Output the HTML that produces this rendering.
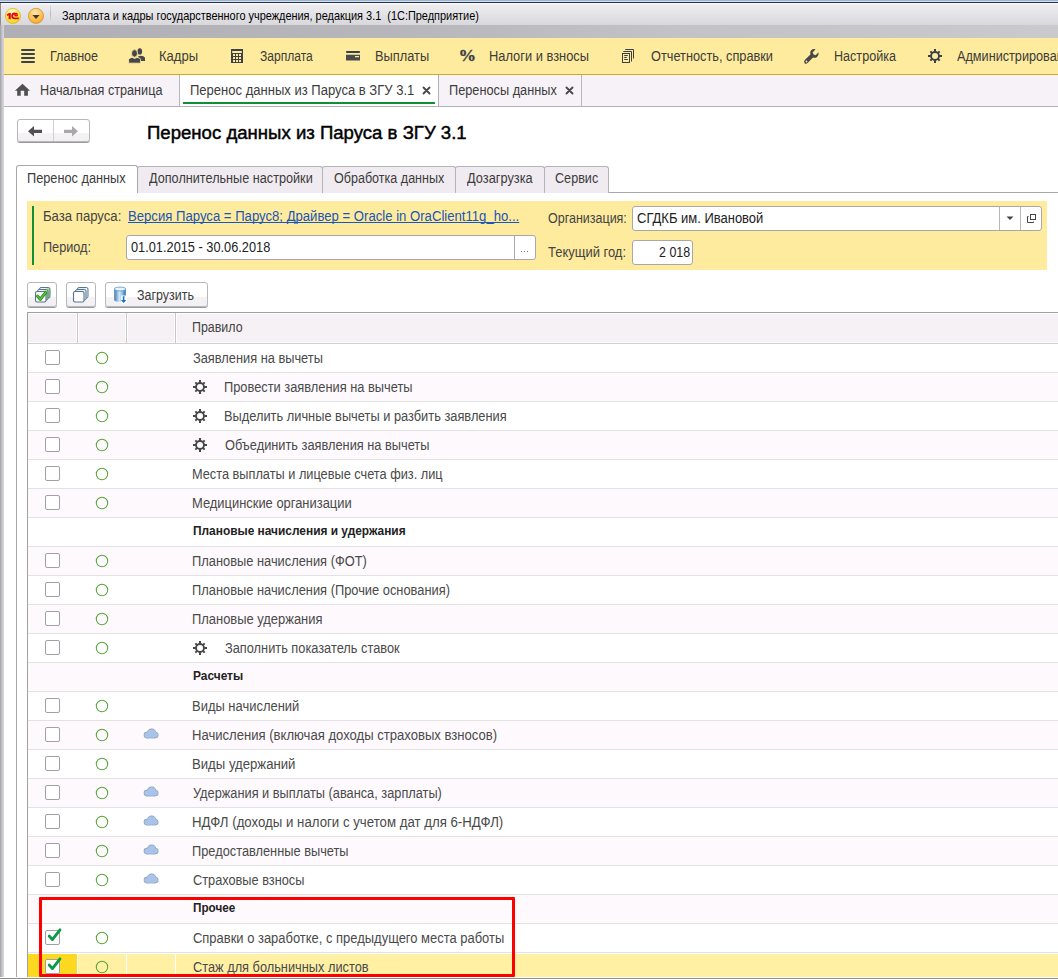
<!DOCTYPE html>
<html><head><meta charset="utf-8">
<style>
*{box-sizing:border-box;margin:0;padding:0}
html,body{width:1058px;height:979px;overflow:hidden;background:#fff;font-family:"Liberation Sans",sans-serif;color:#333}
.a{position:absolute;display:block}
.t{position:absolute;white-space:nowrap;line-height:1}
</style></head><body>
<div class="a" style="left:0px;top:0px;width:1058px;height:1px;background:#9db3d2"></div>
<div class="a" style="left:0px;top:1px;width:1058px;height:1px;background:#d4e0ee"></div>
<div class="a" style="left:0px;top:2px;width:1058px;height:1px;background:#25324a"></div>
<div class="a" style="left:0px;top:3px;width:1058px;height:22px;background:linear-gradient(#ffffff 0px,#ededf0 2px,#e4e4e8 50%,#d8d8dc)"></div>
<div class="a" style="left:0px;top:25px;width:1058px;height:13px;background:linear-gradient(90deg,#afafb5 0px,#b6b6bb 400px,#c3c3c7 680px,#cacacc 1058px)"></div>
<div class="a" style="left:0px;top:25px;width:4px;height:954px;background:linear-gradient(90deg,#a0a0a4,#c6c6ca 50%,#d8d8dc)"></div>
<div class="a" style="left:0px;top:3px;width:1px;height:22px;background:#8a8a90"></div>
<svg class="a" style="left:4px;top:7px;" width="19" height="19" viewBox="0 0 19 19"><defs><radialGradient id="g1" cx="45%" cy="30%" r="70%"><stop offset="0" stop-color="#fffce0"/><stop offset="0.55" stop-color="#ffee55"/><stop offset="1" stop-color="#f8d000"/></radialGradient></defs>
<circle cx="9" cy="8.9" r="7.6" fill="url(#g1)" stroke="#d4b040" stroke-width="0.7"/>
<path d="M2.8 7.4 L5 5.9 L6.8 5.9 L6.8 12.2 L4.6 12.2 L4.6 8.2 L3.4 8.9Z" fill="#e80000"/>
<path d="M11 6.6 Q8.5 6.3 8.2 8.7 Q8 11.4 10.6 11.4 L14.8 11.4" fill="none" stroke="#e80000" stroke-width="1.9"/>
<circle cx="12.1" cy="7.7" r="1.15" fill="none" stroke="#e80000" stroke-width="1.4"/></svg>
<svg class="a" style="left:27px;top:7px;" width="19" height="19" viewBox="0 0 19 19"><defs><radialGradient id="g3" cx="45%" cy="30%" r="70%"><stop offset="0" stop-color="#ffe8b8"/><stop offset="0.55" stop-color="#ffc45a"/><stop offset="1" stop-color="#f5a82a"/></radialGradient></defs>
<circle cx="9" cy="8.9" r="7.6" fill="url(#g3)" stroke="#c49238" stroke-width="0.7"/>
<path d="M5.3 8 L12.7 8 L9 12Z" fill="#4a3a20"/></svg>
<div class="a" style="left:50px;top:5px;width:1px;height:18px;background:linear-gradient(#e0e0e4,#b8b8bc,#e0e0e4)"></div>
<div class="t" style="left:61.80px;top:10px;font-size:12.4px;font-weight:normal;color:#000;transform:scaleX(0.8816);transform-origin:0 0;">Зарплата и кадры государственного учреждения, редакция 3.1&nbsp;&nbsp;(1С:Предприятие)</div>
<div class="a" style="left:4px;top:38px;width:1054px;height:36px;background:#feeb9d"></div>
<div class="a" style="left:4px;top:74px;width:1054px;height:1px;background:#c8aa2a"></div>
<div class="t" style="left:50.29px;top:50px;font-size:13.8px;font-weight:normal;color:#3c3c3c;transform:scaleX(0.9118);transform-origin:0 0;">Главное</div>
<div class="t" style="left:158.96px;top:50px;font-size:13.8px;font-weight:normal;color:#3c3c3c;transform:scaleX(0.9450);transform-origin:0 0;">Кадры</div>
<div class="t" style="left:260.30px;top:50px;font-size:13.8px;font-weight:normal;color:#3c3c3c;transform:scaleX(0.8738);transform-origin:0 0;">Зарплата</div>
<div class="t" style="left:374.67px;top:50px;font-size:13.8px;font-weight:normal;color:#3c3c3c;transform:scaleX(0.9298);transform-origin:0 0;">Выплаты</div>
<div class="t" style="left:488.97px;top:50px;font-size:13.8px;font-weight:normal;color:#3c3c3c;transform:scaleX(0.9330);transform-origin:0 0;">Налоги и взносы</div>
<div class="t" style="left:651.40px;top:50px;font-size:13.8px;font-weight:normal;color:#3c3c3c;transform:scaleX(0.9244);transform-origin:0 0;">Отчетность, справки</div>
<div class="t" style="left:833.89px;top:50px;font-size:13.8px;font-weight:normal;color:#3c3c3c;transform:scaleX(0.9119);transform-origin:0 0;">Настройка</div>
<div class="t" style="left:957.00px;top:50px;font-size:13.8px;font-weight:normal;color:#3c3c3c;transform:scaleX(0.9185);transform-origin:0 0;">Администрирование</div>
<div class="a" style="left:21px;top:49px;width:14px;height:2px;background:#3d4048;border-radius:1px"></div>
<div class="a" style="left:21px;top:53px;width:14px;height:2px;background:#3d4048;border-radius:1px"></div>
<div class="a" style="left:21px;top:57px;width:14px;height:2px;background:#3d4048;border-radius:1px"></div>
<div class="a" style="left:21px;top:61px;width:14px;height:2px;background:#3d4048;border-radius:1px"></div>
<svg class="a" style="left:124px;top:42px;" width="26" height="26" viewBox="0 0 26 26"><g fill="#45474a">
<ellipse cx="15.8" cy="9.4" rx="2.3" ry="3.2"/>
<path d="M14 14.6 Q16 13.6 18 13.9 Q21 14.4 21 16.4 L21 18.9 L15 18.9Z"/>
</g>
<g fill="#45474a" stroke="#feeb9d" stroke-width="0.9">
<ellipse cx="10.5" cy="11.4" rx="3" ry="3.8"/>
<path d="M4.6 17.5 Q5 15.6 8.2 15.4 L10.6 16.4 L13 15.4 Q16.2 15.6 16.6 17.5 L16.6 21.2 L4.6 21.2Z"/>
</g></svg>
<svg class="a" style="left:226px;top:42px;" width="26" height="26" viewBox="0 0 26 26"><path fill="#3d4048" fill-rule="evenodd" d="M5 7 H17 V21 H5Z M6.2 9 V11 H15.8 V9Z
M7 12 V14 H9 V12Z M10 12 V14 H12 V12Z M13 12 V14 H15 V12Z
M7 15 V17 H9 V15Z M10 15 V17 H12 V15Z M13 15 V17 H15 V15Z
M7 18 V20 H9 V18Z M10 18 V20 H12 V18Z M13 18 V20 H15 V18Z"/></svg>
<svg class="a" style="left:340px;top:42px;" width="26" height="26" viewBox="0 0 26 26"><rect x="6" y="9" width="14" height="2" rx="0.8" fill="#3d4048"/>
<path fill="#4a4c4c" fill-rule="evenodd" d="M6 12.7 H20 V18.6 H6Z M15 14 V15.2 H19 V14Z"/></svg>
<div class="t" style="left:458.6px;top:46.6px;-webkit-text-stroke:0.35px #3d4048;font-family:'Liberation Serif',serif;font-weight:bold;font-size:17.6px;color:#3d4048">%</div>
<svg class="a" style="left:614px;top:42px;" width="26" height="26" viewBox="0 0 26 26"><g fill="none" stroke="#3d4048" stroke-width="1">
<rect x="8.5" y="11.5" width="7" height="9"/>
<path d="M9.3 9.5 H17.5 V19.5"/>
<path d="M11.3 7.5 H19.5 V16.5"/>
<path d="M10.2 13.5 H13.8 M10.2 15.5 H12.8 M10.2 17.5 H13.8"/>
</g></svg>
<svg class="a" style="left:798px;top:42px;" width="26" height="26" viewBox="0 0 26 26"><path fill="#45474a" fill-rule="evenodd" d="M7 17.8 L12.4 12.4 Q11.6 9.6 13.2 8.2 Q14.6 6.8 17.6 7.2 L14.6 10.6 L15.6 12.6 L17.6 13.2 L20.6 10.2 Q20.9 13.4 19 15 Q17.4 16.3 15 15.6 L9.6 21 Q7.8 22.4 6.6 21.2 Q5.4 19.6 7 17.8Z M8.5 19.5 m-0.9 0 a0.9 0.9 0 1 0 1.8 0 a0.9 0.9 0 1 0 -1.8 0Z"/></svg>
<svg class="a" style="left:922px;top:42px;" width="26" height="26" viewBox="0 0 26 26"><g fill="#3d4048"><path fill-rule="evenodd" d="M13 14 m-4.9 0 a4.9 4.9 0 1 0 9.8 0 a4.9 4.9 0 1 0 -9.8 0Z M13 14 m-3 0 a3 3 0 1 0 6 0 a3 3 0 1 0 -6 0Z"/>
<g transform="translate(13 14)"><rect x="-1" y="-7" width="2" height="14"/><rect x="-7" y="-1" width="14" height="2"/>
<rect x="-1" y="-6.6" width="2" height="13.2" transform="rotate(45)"/><rect x="-1" y="-6.6" width="2" height="13.2" transform="rotate(-45)"/></g>
<circle cx="13" cy="14" r="3" fill="#feeb9d"/></g></svg>
<div class="a" style="left:4px;top:75px;width:1054px;height:31px;background:#f7f2f7"></div>
<div class="a" style="left:4px;top:106px;width:1054px;height:1px;background:#b4b4b8"></div>
<div class="a" style="left:179px;top:75px;width:1px;height:31px;background:#b8b8bc"></div>
<div class="a" style="left:180px;top:75px;width:258px;height:31px;background:#fff"></div>
<div class="a" style="left:438px;top:75px;width:1px;height:31px;background:#b0b0b6"></div>
<div class="a" style="left:581px;top:75px;width:1px;height:31px;background:#b8b8bc"></div>
<div class="a" style="left:183px;top:102px;width:252px;height:2px;background:#109035"></div>
<svg class="a" style="left:8px;top:78px;" width="26" height="26" viewBox="0 0 26 26"><path fill="#505050" d="M14.5 5.8 L22 12.7 H19.9 V17.8 H16.2 V12.7 H12.7 V17.8 H9.2 V12.7 H6.9Z"/></svg>
<div class="t" style="left:40.18px;top:84px;font-size:13.8px;font-weight:normal;color:#3c3c3c;transform:scaleX(0.9173);transform-origin:0 0;">Начальная страница</div>
<div class="t" style="left:190.16px;top:84px;font-size:13.8px;font-weight:normal;color:#3c3c3c;transform:scaleX(0.9445);transform-origin:0 0;">Перенос данных из Паруса в ЗГУ 3.1</div>
<div class="t" style="left:449.08px;top:84px;font-size:13.8px;font-weight:normal;color:#3c3c3c;transform:scaleX(0.9241);transform-origin:0 0;">Переносы данных</div>
<svg class="a" style="left:414px;top:78px;" width="26" height="26" viewBox="0 0 26 26"><path d="M9.5 9.5 L15.5 15.5 M15.5 9.5 L9.5 15.5" stroke="#4a4a4a" stroke-width="1.9" stroke-linecap="round"/></svg>
<svg class="a" style="left:557px;top:78px;" width="26" height="26" viewBox="0 0 26 26"><path d="M9.5 9.5 L15.5 15.5 M15.5 9.5 L9.5 15.5" stroke="#4a4a4a" stroke-width="1.9" stroke-linecap="round"/></svg>
<div class="a" style="left:17px;top:119px;width:73px;height:23px;border:1px solid #b8b8b8;border-radius:3px;background:linear-gradient(#fff 0%,#fff 60%,#f5f2f5 62%,#f3f0f3);box-shadow:0 1px 0 #9a9a9a"></div>
<div class="a" style="left:53px;top:120px;width:1px;height:21px;background:#d0d0d0"></div>
<svg class="a" style="left:26px;top:124px;" width="18" height="14" viewBox="0 0 18 14"><path fill="#505050" d="M2 7.3 L8 2 V5.7 H16 V8.9 H8 V12.6Z"/></svg>
<svg class="a" style="left:62px;top:124px;" width="18" height="14" viewBox="0 0 18 14"><path fill="#a8a8a8" d="M16 7.3 L10 2 V5.7 H2 V8.9 H10 V12.6Z"/></svg>
<div class="t" style="left:147.01px;top:124px;font-size:18.8px;font-weight:normal;color:#000;transform:scaleX(0.9891);transform-origin:0 0;-webkit-text-stroke:0.45px #000">Перенос данных из Паруса в ЗГУ 3.1</div>
<div class="a" style="left:16px;top:192px;width:1042px;height:1px;background:#a8a8a8"></div>
<div class="a" style="left:16px;top:192px;width:1px;height:787px;background:#a8a8a8"></div>
<div class="a" style="left:137px;top:166px;width:186px;height:27px;background:#f0ebf0;border:1px solid #b4b4b8;border-bottom:none;border-radius:3px 3px 0 0"></div>
<div class="a" style="left:322px;top:166px;width:134px;height:27px;background:#f0ebf0;border:1px solid #b4b4b8;border-bottom:none;border-radius:3px 3px 0 0"></div>
<div class="a" style="left:455px;top:166px;width:90px;height:27px;background:#f0ebf0;border:1px solid #b4b4b8;border-bottom:none;border-radius:3px 3px 0 0"></div>
<div class="a" style="left:544px;top:166px;width:65px;height:27px;background:#f0ebf0;border:1px solid #b4b4b8;border-bottom:none;border-radius:3px 3px 0 0"></div>
<div class="a" style="left:16px;top:165px;width:122px;height:28px;background:#fff;border:1px solid #a8a8a8;border-bottom:none;border-radius:3px 3px 0 0"></div>
<div class="t" style="left:27.48px;top:172px;font-size:13.8px;font-weight:normal;color:#3c3c3c;transform:scaleX(0.9236);transform-origin:0 0;">Перенос данных</div>
<div class="t" style="left:148.70px;top:172px;font-size:13.8px;font-weight:normal;color:#3c3c3c;transform:scaleX(0.9180);transform-origin:0 0;">Дополнительные настройки</div>
<div class="t" style="left:334.10px;top:172px;font-size:13.8px;font-weight:normal;color:#3c3c3c;transform:scaleX(0.9099);transform-origin:0 0;">Обработка данных</div>
<div class="t" style="left:466.80px;top:172px;font-size:13.8px;font-weight:normal;color:#3c3c3c;transform:scaleX(0.9268);transform-origin:0 0;">Дозагрузка</div>
<div class="t" style="left:554.80px;top:172px;font-size:13.8px;font-weight:normal;color:#3c3c3c;transform:scaleX(0.9149);transform-origin:0 0;">Сервис</div>
<div class="a" style="left:27px;top:201px;width:1020px;height:69px;background:#feeb9d"></div>
<div class="a" style="left:32px;top:206px;width:2px;height:59px;background:#109035"></div>
<div class="t" style="left:42.55px;top:210px;font-size:13.8px;font-weight:normal;color:#444;transform:scaleX(0.9525);transform-origin:0 0;">База паруса:</div>
<div class="t" style="left:127.85px;top:210px;font-size:13.8px;font-weight:normal;color:#1a55b8;transform:scaleX(0.9516);transform-origin:0 0;text-decoration:underline;text-decoration-skip-ink:none;text-underline-offset:1px">Версия Паруса = Парус8; Драйвер = Oracle in OraClient11g_ho...</div>
<div class="t" style="left:42.58px;top:241px;font-size:13.8px;font-weight:normal;color:#444;transform:scaleX(0.9180);transform-origin:0 0;">Период:</div>
<div class="a" style="left:126px;top:235px;width:410px;height:25px;background:#fff;border:1px solid #a8a8a8;border-radius:3px"></div>
<div class="a" style="left:514px;top:236px;width:1px;height:23px;background:#a8a8ae"></div>
<div class="t" style="left:130.70px;top:241px;font-size:13.8px;font-weight:normal;color:#222;transform:scaleX(0.9260);transform-origin:0 0;">01.01.2015 - 30.06.2018</div>
<div class="a" style="left:520.8px;top:250.6px;width:1.6px;height:1.6px;background:#505050;border-radius:0.5px"></div>
<div class="a" style="left:523.8px;top:250.6px;width:1.6px;height:1.6px;background:#505050;border-radius:0.5px"></div>
<div class="a" style="left:526.9px;top:250.6px;width:1.6px;height:1.6px;background:#505050;border-radius:0.5px"></div>
<div class="t" style="left:547.50px;top:212px;font-size:13.8px;font-weight:normal;color:#444;transform:scaleX(0.9058);transform-origin:0 0;">Организация:</div>
<div class="a" style="left:632px;top:206px;width:410px;height:25px;background:#fff;border:1px solid #a8a8a8;border-radius:3px"></div>
<div class="a" style="left:999px;top:207px;width:1px;height:23px;background:#b8b8b8"></div>
<div class="a" style="left:1020px;top:207px;width:1px;height:23px;background:#b8b8b8"></div>
<div class="t" style="left:636.90px;top:212px;font-size:13.8px;font-weight:normal;color:#222;transform:scaleX(0.9410);transform-origin:0 0;">СГДКБ им. Ивановой</div>
<svg class="a" style="left:1003px;top:213px;" width="14" height="10" viewBox="0 0 14 10"><path d="M3.5 3.5 H10.5 L7 7Z" fill="#444"/></svg>
<svg class="a" style="left:1024px;top:212px;" width="14" height="14" viewBox="0 0 14 14"><g fill="none" stroke="#444" stroke-width="1"><rect x="6.5" y="2.5" width="5" height="5"/><path d="M4.5 4.5 H3.5 V10.5 H9.5 V9.5"/></g></svg>
<div class="t" style="left:547.50px;top:246px;font-size:13.8px;font-weight:normal;color:#444;transform:scaleX(0.9402);transform-origin:0 0;">Текущий год:</div>
<div class="a" style="left:632px;top:240px;width:61px;height:25px;background:#fff;border:1px solid #a8a8a8;border-radius:3px"></div>
<div class="t" style="left:658.60px;top:246px;font-size:13.8px;font-weight:normal;color:#222;transform:scaleX(0.9029);transform-origin:0 0;">2 018</div>
<div class="a" style="left:27px;top:282px;width:30px;height:25px;border:1px solid #b8b8b8;border-radius:3px;background:linear-gradient(#fff 0%,#fff 60%,#f5f2f5 62%,#f3f0f3 100%);box-shadow:0 1px 0 #9a9a9a"></div>
<div class="a" style="left:66px;top:282px;width:30px;height:25px;border:1px solid #b8b8b8;border-radius:3px;background:linear-gradient(#fff 0%,#fff 60%,#f5f2f5 62%,#f3f0f3 100%);box-shadow:0 1px 0 #9a9a9a"></div>
<div class="a" style="left:105px;top:282px;width:103px;height:25px;border:1px solid #b8b8b8;border-radius:3px;background:linear-gradient(#fff 0%,#fff 60%,#f5f2f5 62%,#f3f0f3 100%);box-shadow:0 1px 0 #9a9a9a"></div>
<svg class="a" style="left:26px;top:280px;" width="34" height="30" viewBox="0 0 34 30"><defs><linearGradient id="gg" x1="0" x2="1"><stop offset="0.5" stop-color="#eef6f0"/><stop offset="1" stop-color="#8fd070"/></linearGradient></defs><rect x="13.5" y="7.5" width="10.5" height="10.5" rx="1.6" fill="url(#gg)" stroke="#557590" stroke-width="1"/><rect x="11.5" y="9.5" width="10.5" height="10.5" rx="1.6" fill="url(#gg)" stroke="#557590" stroke-width="1"/><rect x="9.5" y="11.5" width="10.5" height="10.5" rx="1.6" fill="#fff" stroke="#557590" stroke-width="1.1"/><path d="M11.6 16.2 L14.3 19.3 L19.6 12.6" fill="none" stroke="#1e8a12" stroke-width="3" stroke-linecap="round" stroke-linejoin="round"/><path d="M11.6 16.2 L14.3 19.3 L19.6 12.6" fill="none" stroke="#5cc038" stroke-width="1.6" stroke-linecap="round" stroke-linejoin="round"/></svg>
<svg class="a" style="left:64px;top:280px;" width="34" height="30" viewBox="0 0 34 30"><rect x="13.5" y="7.5" width="10.5" height="10.5" rx="1.6" fill="#e8f0f2" stroke="#557590" stroke-width="1"/><rect x="11.5" y="9.5" width="10.5" height="10.5" rx="1.6" fill="#e8f0f2" stroke="#557590" stroke-width="1"/><rect x="9.5" y="11.5" width="10.5" height="10.5" rx="1.6" fill="#fff" stroke="#557590" stroke-width="1.1"/></svg>
<svg class="a" style="left:106px;top:280px;" width="30" height="30" viewBox="0 0 30 30"><defs><linearGradient id="db" x1="0" x2="1"><stop offset="0" stop-color="#3d78b0"/><stop offset="0.45" stop-color="#cfe8fa"/><stop offset="0.7" stop-color="#8bbce6"/><stop offset="1" stop-color="#2a68a8"/></linearGradient></defs>
<path d="M8.2 9 V20 Q8.2 21.8 14 21.8 Q19.8 21.8 19.8 20 V9Z" fill="url(#db)"/>
<ellipse cx="14" cy="9" rx="5.8" ry="1.9" fill="#e4f4fc" stroke="#5a98c8" stroke-width="0.8"/>
<rect x="15" y="15.5" width="6" height="8" fill="#fff"/>
<path d="M17.6 16.2 V21.5" stroke="#1a70c8" stroke-width="1.6"/><path d="M14.9 20 L20.3 20 L17.6 23Z" fill="#1a70c8"/></svg>
<div class="t" style="left:136.50px;top:289px;font-size:13.8px;font-weight:normal;color:#3c3c3c;transform:scaleX(0.9032);transform-origin:0 0;">Загрузить</div>
<div class="a" style="left:27px;top:312px;width:1031px;height:1px;background:#a0a0a0"></div>
<div class="a" style="left:27px;top:312px;width:1px;height:667px;background:#a0a0a0"></div>
<div class="a" style="left:28px;top:313px;width:1030px;height:1px;background:#fff"></div>
<div class="a" style="left:28px;top:314px;width:1030px;height:28px;background:#f6f1f5"></div>
<div class="a" style="left:28px;top:342px;width:1030px;height:1px;background:#fdfcfd"></div>
<div class="a" style="left:28px;top:343px;width:1030px;height:1px;background:#d0d0d0"></div>
<div class="a" style="left:28px;top:313px;width:1030px;height:1px;background:#fff"></div>
<div class="a" style="left:76px;top:313px;width:3px;height:30px;background:#fff"></div>
<div class="a" style="left:77px;top:313px;width:1px;height:30px;background:#c6c6c6"></div>
<div class="a" style="left:125px;top:313px;width:3px;height:30px;background:#fff"></div>
<div class="a" style="left:126px;top:313px;width:1px;height:30px;background:#c6c6c6"></div>
<div class="a" style="left:174px;top:313px;width:3px;height:30px;background:#fff"></div>
<div class="a" style="left:175px;top:313px;width:1px;height:30px;background:#c6c6c6"></div>
<div class="t" style="left:192.30px;top:321px;font-size:13.8px;font-weight:normal;color:#444;transform:scaleX(0.9000);transform-origin:0 0;">Правило</div>
<div class="a" style="left:28px;top:344px;width:1030px;height:28px;background:#fff"></div>
<div class="a" style="left:28px;top:372px;width:1030px;height:1px;background:#e2e2e2"></div>
<div class="a" style="left:45px;top:350px;width:15px;height:15px;background:#fff;border:1px solid #a0a0a6;border-radius:2px"></div>
<svg class="a" style="left:94px;top:350px;" width="16" height="16" viewBox="0 0 16 16"><circle cx="8" cy="8" r="5.7" fill="none" stroke="#58a63c" stroke-width="1.05"/></svg>
<div class="t" style="left:192.90px;top:352px;font-size:13.8px;font-weight:normal;color:#4a4a4a;transform:scaleX(0.9288);transform-origin:0 0;">Заявления на вычеты</div>
<div class="a" style="left:28px;top:373px;width:1030px;height:28px;background:#fdf9fd"></div>
<div class="a" style="left:28px;top:401px;width:1030px;height:1px;background:#e2e2e2"></div>
<div class="a" style="left:45px;top:379px;width:15px;height:15px;background:#fff;border:1px solid #a0a0a6;border-radius:2px"></div>
<svg class="a" style="left:94px;top:379px;" width="16" height="16" viewBox="0 0 16 16"><circle cx="8" cy="8" r="5.7" fill="none" stroke="#58a63c" stroke-width="1.05"/></svg>
<svg class="a" style="left:188px;top:376px;" width="26" height="22" viewBox="0 0 26 22"><g fill="#484848"><path fill-rule="evenodd" d="M12 11 m-4.9 0 a4.9 4.9 0 1 0 9.8 0 a4.9 4.9 0 1 0 -9.8 0Z M12 11 m-3 0 a3 3 0 1 0 6 0 a3 3 0 1 0 -6 0Z"/>
<g transform="translate(12 11)"><rect x="-1" y="-7" width="2" height="14"/><rect x="-7" y="-1" width="14" height="2"/>
<rect x="-1" y="-6.6" width="2" height="13.2" transform="rotate(45)"/><rect x="-1" y="-6.6" width="2" height="13.2" transform="rotate(-45)"/></g>
<circle cx="12" cy="11" r="3" fill="#fdf9fd"/></g></svg>
<div class="t" style="left:224.07px;top:381px;font-size:13.8px;font-weight:normal;color:#4a4a4a;transform:scaleX(0.9303);transform-origin:0 0;">Провести заявления на вычеты</div>
<div class="a" style="left:28px;top:402px;width:1030px;height:28px;background:#fff"></div>
<div class="a" style="left:28px;top:430px;width:1030px;height:1px;background:#e2e2e2"></div>
<div class="a" style="left:45px;top:408px;width:15px;height:15px;background:#fff;border:1px solid #a0a0a6;border-radius:2px"></div>
<svg class="a" style="left:94px;top:408px;" width="16" height="16" viewBox="0 0 16 16"><circle cx="8" cy="8" r="5.7" fill="none" stroke="#58a63c" stroke-width="1.05"/></svg>
<svg class="a" style="left:188px;top:405px;" width="26" height="22" viewBox="0 0 26 22"><g fill="#484848"><path fill-rule="evenodd" d="M12 11 m-4.9 0 a4.9 4.9 0 1 0 9.8 0 a4.9 4.9 0 1 0 -9.8 0Z M12 11 m-3 0 a3 3 0 1 0 6 0 a3 3 0 1 0 -6 0Z"/>
<g transform="translate(12 11)"><rect x="-1" y="-7" width="2" height="14"/><rect x="-7" y="-1" width="14" height="2"/>
<rect x="-1" y="-6.6" width="2" height="13.2" transform="rotate(45)"/><rect x="-1" y="-6.6" width="2" height="13.2" transform="rotate(-45)"/></g>
<circle cx="12" cy="11" r="3" fill="#fff"/></g></svg>
<div class="t" style="left:224.07px;top:410px;font-size:13.8px;font-weight:normal;color:#4a4a4a;transform:scaleX(0.9298);transform-origin:0 0;">Выделить личные вычеты и разбить заявления</div>
<div class="a" style="left:28px;top:431px;width:1030px;height:28px;background:#fdf9fd"></div>
<div class="a" style="left:28px;top:459px;width:1030px;height:1px;background:#e2e2e2"></div>
<div class="a" style="left:45px;top:437px;width:15px;height:15px;background:#fff;border:1px solid #a0a0a6;border-radius:2px"></div>
<svg class="a" style="left:94px;top:437px;" width="16" height="16" viewBox="0 0 16 16"><circle cx="8" cy="8" r="5.7" fill="none" stroke="#58a63c" stroke-width="1.05"/></svg>
<svg class="a" style="left:188px;top:434px;" width="26" height="22" viewBox="0 0 26 22"><g fill="#484848"><path fill-rule="evenodd" d="M12 11 m-4.9 0 a4.9 4.9 0 1 0 9.8 0 a4.9 4.9 0 1 0 -9.8 0Z M12 11 m-3 0 a3 3 0 1 0 6 0 a3 3 0 1 0 -6 0Z"/>
<g transform="translate(12 11)"><rect x="-1" y="-7" width="2" height="14"/><rect x="-7" y="-1" width="14" height="2"/>
<rect x="-1" y="-6.6" width="2" height="13.2" transform="rotate(45)"/><rect x="-1" y="-6.6" width="2" height="13.2" transform="rotate(-45)"/></g>
<circle cx="12" cy="11" r="3" fill="#fdf9fd"/></g></svg>
<div class="t" style="left:225.00px;top:439px;font-size:13.8px;font-weight:normal;color:#4a4a4a;transform:scaleX(0.9273);transform-origin:0 0;">Объединить заявления на вычеты</div>
<div class="a" style="left:28px;top:460px;width:1030px;height:28px;background:#fff"></div>
<div class="a" style="left:28px;top:488px;width:1030px;height:1px;background:#e2e2e2"></div>
<div class="a" style="left:45px;top:466px;width:15px;height:15px;background:#fff;border:1px solid #a0a0a6;border-radius:2px"></div>
<svg class="a" style="left:94px;top:466px;" width="16" height="16" viewBox="0 0 16 16"><circle cx="8" cy="8" r="5.7" fill="none" stroke="#58a63c" stroke-width="1.05"/></svg>
<div class="t" style="left:191.98px;top:468px;font-size:13.8px;font-weight:normal;color:#4a4a4a;transform:scaleX(0.9244);transform-origin:0 0;">Места выплаты и лицевые счета физ. лиц</div>
<div class="a" style="left:28px;top:489px;width:1030px;height:28px;background:#fdf9fd"></div>
<div class="a" style="left:28px;top:517px;width:1030px;height:1px;background:#e2e2e2"></div>
<div class="a" style="left:45px;top:495px;width:15px;height:15px;background:#fff;border:1px solid #a0a0a6;border-radius:2px"></div>
<svg class="a" style="left:94px;top:495px;" width="16" height="16" viewBox="0 0 16 16"><circle cx="8" cy="8" r="5.7" fill="none" stroke="#58a63c" stroke-width="1.05"/></svg>
<div class="t" style="left:191.96px;top:497px;font-size:13.8px;font-weight:normal;color:#4a4a4a;transform:scaleX(0.9361);transform-origin:0 0;">Медицинские организации</div>
<div class="a" style="left:28px;top:518px;width:1030px;height:28px;background:#fff"></div>
<div class="a" style="left:28px;top:546px;width:1030px;height:1px;background:#e2e2e2"></div>
<div class="t" style="left:192.84px;top:525px;font-size:12.4px;font-weight:bold;color:#222;transform:scaleX(0.9605);transform-origin:0 0;">Плановые начисления и удержания</div>
<div class="a" style="left:28px;top:547px;width:1030px;height:28px;background:#fdf9fd"></div>
<div class="a" style="left:28px;top:575px;width:1030px;height:1px;background:#e2e2e2"></div>
<div class="a" style="left:45px;top:553px;width:15px;height:15px;background:#fff;border:1px solid #a0a0a6;border-radius:2px"></div>
<svg class="a" style="left:94px;top:553px;" width="16" height="16" viewBox="0 0 16 16"><circle cx="8" cy="8" r="5.7" fill="none" stroke="#58a63c" stroke-width="1.05"/></svg>
<div class="t" style="left:191.97px;top:555px;font-size:13.8px;font-weight:normal;color:#4a4a4a;transform:scaleX(0.9317);transform-origin:0 0;">Плановые начисления (ФОТ)</div>
<div class="a" style="left:28px;top:576px;width:1030px;height:28px;background:#fff"></div>
<div class="a" style="left:28px;top:604px;width:1030px;height:1px;background:#e2e2e2"></div>
<div class="a" style="left:45px;top:582px;width:15px;height:15px;background:#fff;border:1px solid #a0a0a6;border-radius:2px"></div>
<svg class="a" style="left:94px;top:582px;" width="16" height="16" viewBox="0 0 16 16"><circle cx="8" cy="8" r="5.7" fill="none" stroke="#58a63c" stroke-width="1.05"/></svg>
<div class="t" style="left:191.97px;top:584px;font-size:13.8px;font-weight:normal;color:#4a4a4a;transform:scaleX(0.9316);transform-origin:0 0;">Плановые начисления (Прочие основания)</div>
<div class="a" style="left:28px;top:605px;width:1030px;height:28px;background:#fdf9fd"></div>
<div class="a" style="left:28px;top:633px;width:1030px;height:1px;background:#e2e2e2"></div>
<div class="a" style="left:45px;top:611px;width:15px;height:15px;background:#fff;border:1px solid #a0a0a6;border-radius:2px"></div>
<svg class="a" style="left:94px;top:611px;" width="16" height="16" viewBox="0 0 16 16"><circle cx="8" cy="8" r="5.7" fill="none" stroke="#58a63c" stroke-width="1.05"/></svg>
<div class="t" style="left:191.96px;top:613px;font-size:13.8px;font-weight:normal;color:#4a4a4a;transform:scaleX(0.9370);transform-origin:0 0;">Плановые удержания</div>
<div class="a" style="left:28px;top:634px;width:1030px;height:28px;background:#fff"></div>
<div class="a" style="left:28px;top:662px;width:1030px;height:1px;background:#e2e2e2"></div>
<div class="a" style="left:45px;top:640px;width:15px;height:15px;background:#fff;border:1px solid #a0a0a6;border-radius:2px"></div>
<svg class="a" style="left:94px;top:640px;" width="16" height="16" viewBox="0 0 16 16"><circle cx="8" cy="8" r="5.7" fill="none" stroke="#58a63c" stroke-width="1.05"/></svg>
<svg class="a" style="left:188px;top:637px;" width="26" height="22" viewBox="0 0 26 22"><g fill="#484848"><path fill-rule="evenodd" d="M12 11 m-4.9 0 a4.9 4.9 0 1 0 9.8 0 a4.9 4.9 0 1 0 -9.8 0Z M12 11 m-3 0 a3 3 0 1 0 6 0 a3 3 0 1 0 -6 0Z"/>
<g transform="translate(12 11)"><rect x="-1" y="-7" width="2" height="14"/><rect x="-7" y="-1" width="14" height="2"/>
<rect x="-1" y="-6.6" width="2" height="13.2" transform="rotate(45)"/><rect x="-1" y="-6.6" width="2" height="13.2" transform="rotate(-45)"/></g>
<circle cx="12" cy="11" r="3" fill="#fff"/></g></svg>
<div class="t" style="left:225.00px;top:642px;font-size:13.8px;font-weight:normal;color:#4a4a4a;transform:scaleX(0.9271);transform-origin:0 0;">Заполнить показатель ставок</div>
<div class="a" style="left:28px;top:663px;width:1030px;height:28px;background:#fdf9fd"></div>
<div class="a" style="left:28px;top:691px;width:1030px;height:1px;background:#e2e2e2"></div>
<div class="t" style="left:192.84px;top:670px;font-size:12.4px;font-weight:bold;color:#222;transform:scaleX(0.9608);transform-origin:0 0;">Расчеты</div>
<div class="a" style="left:28px;top:692px;width:1030px;height:28px;background:#fff"></div>
<div class="a" style="left:28px;top:720px;width:1030px;height:1px;background:#e2e2e2"></div>
<div class="a" style="left:45px;top:698px;width:15px;height:15px;background:#fff;border:1px solid #a0a0a6;border-radius:2px"></div>
<svg class="a" style="left:94px;top:698px;" width="16" height="16" viewBox="0 0 16 16"><circle cx="8" cy="8" r="5.7" fill="none" stroke="#58a63c" stroke-width="1.05"/></svg>
<div class="t" style="left:191.96px;top:700px;font-size:13.8px;font-weight:normal;color:#4a4a4a;transform:scaleX(0.9389);transform-origin:0 0;">Виды начислений</div>
<div class="a" style="left:28px;top:721px;width:1030px;height:28px;background:#fdf9fd"></div>
<div class="a" style="left:28px;top:749px;width:1030px;height:1px;background:#e2e2e2"></div>
<div class="a" style="left:45px;top:727px;width:15px;height:15px;background:#fff;border:1px solid #a0a0a6;border-radius:2px"></div>
<svg class="a" style="left:94px;top:727px;" width="16" height="16" viewBox="0 0 16 16"><circle cx="8" cy="8" r="5.7" fill="none" stroke="#58a63c" stroke-width="1.05"/></svg>
<svg class="a" style="left:142px;top:727px;" width="18" height="14" viewBox="0 0 18 14"><g fill="#8aa0bc"><circle cx="5" cy="8.1" r="3.3"/><circle cx="9.6" cy="6.3" r="4.8"/><circle cx="13.3" cy="8.1" r="3.2"/><rect x="5" y="7.3999999999999995" width="8.3" height="4.0"/></g><g fill="#a9c3e9"><circle cx="5" cy="8.1" r="2.6"/><circle cx="9.6" cy="6.3" r="4.1"/><circle cx="13.3" cy="8.1" r="2.5"/><rect x="5" y="8.1" width="8.3" height="2.6"/></g></svg>
<div class="t" style="left:191.95px;top:729px;font-size:13.8px;font-weight:normal;color:#4a4a4a;transform:scaleX(0.9481);transform-origin:0 0;">Начисления (включая доходы страховых взносов)</div>
<div class="a" style="left:28px;top:750px;width:1030px;height:28px;background:#fff"></div>
<div class="a" style="left:28px;top:778px;width:1030px;height:1px;background:#e2e2e2"></div>
<div class="a" style="left:45px;top:756px;width:15px;height:15px;background:#fff;border:1px solid #a0a0a6;border-radius:2px"></div>
<svg class="a" style="left:94px;top:756px;" width="16" height="16" viewBox="0 0 16 16"><circle cx="8" cy="8" r="5.7" fill="none" stroke="#58a63c" stroke-width="1.05"/></svg>
<div class="t" style="left:191.95px;top:758px;font-size:13.8px;font-weight:normal;color:#4a4a4a;transform:scaleX(0.9533);transform-origin:0 0;">Виды удержаний</div>
<div class="a" style="left:28px;top:779px;width:1030px;height:28px;background:#fdf9fd"></div>
<div class="a" style="left:28px;top:807px;width:1030px;height:1px;background:#e2e2e2"></div>
<div class="a" style="left:45px;top:785px;width:15px;height:15px;background:#fff;border:1px solid #a0a0a6;border-radius:2px"></div>
<svg class="a" style="left:94px;top:785px;" width="16" height="16" viewBox="0 0 16 16"><circle cx="8" cy="8" r="5.7" fill="none" stroke="#58a63c" stroke-width="1.05"/></svg>
<svg class="a" style="left:142px;top:785px;" width="18" height="14" viewBox="0 0 18 14"><g fill="#8aa0bc"><circle cx="5" cy="8.1" r="3.3"/><circle cx="9.6" cy="6.3" r="4.8"/><circle cx="13.3" cy="8.1" r="3.2"/><rect x="5" y="7.3999999999999995" width="8.3" height="4.0"/></g><g fill="#a9c3e9"><circle cx="5" cy="8.1" r="2.6"/><circle cx="9.6" cy="6.3" r="4.1"/><circle cx="13.3" cy="8.1" r="2.5"/><rect x="5" y="8.1" width="8.3" height="2.6"/></g></svg>
<div class="t" style="left:192.90px;top:787px;font-size:13.8px;font-weight:normal;color:#4a4a4a;transform:scaleX(0.9261);transform-origin:0 0;">Удержания и выплаты (аванса, зарплаты)</div>
<div class="a" style="left:28px;top:808px;width:1030px;height:28px;background:#fff"></div>
<div class="a" style="left:28px;top:836px;width:1030px;height:1px;background:#e2e2e2"></div>
<div class="a" style="left:45px;top:814px;width:15px;height:15px;background:#fff;border:1px solid #a0a0a6;border-radius:2px"></div>
<svg class="a" style="left:94px;top:814px;" width="16" height="16" viewBox="0 0 16 16"><circle cx="8" cy="8" r="5.7" fill="none" stroke="#58a63c" stroke-width="1.05"/></svg>
<svg class="a" style="left:142px;top:814px;" width="18" height="14" viewBox="0 0 18 14"><g fill="#8aa0bc"><circle cx="5" cy="8.1" r="3.3"/><circle cx="9.6" cy="6.3" r="4.8"/><circle cx="13.3" cy="8.1" r="3.2"/><rect x="5" y="7.3999999999999995" width="8.3" height="4.0"/></g><g fill="#a9c3e9"><circle cx="5" cy="8.1" r="2.6"/><circle cx="9.6" cy="6.3" r="4.1"/><circle cx="13.3" cy="8.1" r="2.5"/><rect x="5" y="8.1" width="8.3" height="2.6"/></g></svg>
<div class="t" style="left:191.94px;top:816px;font-size:13.8px;font-weight:normal;color:#4a4a4a;transform:scaleX(0.9594);transform-origin:0 0;">НДФЛ (доходы и налоги с учетом дат для 6-НДФЛ)</div>
<div class="a" style="left:28px;top:837px;width:1030px;height:28px;background:#fdf9fd"></div>
<div class="a" style="left:28px;top:865px;width:1030px;height:1px;background:#e2e2e2"></div>
<div class="a" style="left:45px;top:843px;width:15px;height:15px;background:#fff;border:1px solid #a0a0a6;border-radius:2px"></div>
<svg class="a" style="left:94px;top:843px;" width="16" height="16" viewBox="0 0 16 16"><circle cx="8" cy="8" r="5.7" fill="none" stroke="#58a63c" stroke-width="1.05"/></svg>
<svg class="a" style="left:142px;top:843px;" width="18" height="14" viewBox="0 0 18 14"><g fill="#8aa0bc"><circle cx="5" cy="8.1" r="3.3"/><circle cx="9.6" cy="6.3" r="4.8"/><circle cx="13.3" cy="8.1" r="3.2"/><rect x="5" y="7.3999999999999995" width="8.3" height="4.0"/></g><g fill="#a9c3e9"><circle cx="5" cy="8.1" r="2.6"/><circle cx="9.6" cy="6.3" r="4.1"/><circle cx="13.3" cy="8.1" r="2.5"/><rect x="5" y="8.1" width="8.3" height="2.6"/></g></svg>
<div class="t" style="left:191.97px;top:845px;font-size:13.8px;font-weight:normal;color:#4a4a4a;transform:scaleX(0.9281);transform-origin:0 0;">Предоставленные вычеты</div>
<div class="a" style="left:28px;top:866px;width:1030px;height:28px;background:#fff"></div>
<div class="a" style="left:28px;top:894px;width:1030px;height:1px;background:#e2e2e2"></div>
<div class="a" style="left:45px;top:872px;width:15px;height:15px;background:#fff;border:1px solid #a0a0a6;border-radius:2px"></div>
<svg class="a" style="left:94px;top:872px;" width="16" height="16" viewBox="0 0 16 16"><circle cx="8" cy="8" r="5.7" fill="none" stroke="#58a63c" stroke-width="1.05"/></svg>
<svg class="a" style="left:142px;top:872px;" width="18" height="14" viewBox="0 0 18 14"><g fill="#8aa0bc"><circle cx="5" cy="8.1" r="3.3"/><circle cx="9.6" cy="6.3" r="4.8"/><circle cx="13.3" cy="8.1" r="3.2"/><rect x="5" y="7.3999999999999995" width="8.3" height="4.0"/></g><g fill="#a9c3e9"><circle cx="5" cy="8.1" r="2.6"/><circle cx="9.6" cy="6.3" r="4.1"/><circle cx="13.3" cy="8.1" r="2.5"/><rect x="5" y="8.1" width="8.3" height="2.6"/></g></svg>
<div class="t" style="left:192.90px;top:874px;font-size:13.8px;font-weight:normal;color:#4a4a4a;transform:scaleX(0.9250);transform-origin:0 0;">Страховые взносы</div>
<div class="a" style="left:28px;top:895px;width:1030px;height:28px;background:#fdf9fd"></div>
<div class="a" style="left:28px;top:923px;width:1030px;height:1px;background:#e2e2e2"></div>
<div class="t" style="left:192.85px;top:902px;font-size:12.4px;font-weight:bold;color:#222;transform:scaleX(0.9455);transform-origin:0 0;">Прочее</div>
<div class="a" style="left:28px;top:924px;width:1030px;height:28px;background:#fff"></div>
<div class="a" style="left:28px;top:952px;width:1030px;height:1px;background:#e2e2e2"></div>
<div class="a" style="left:45px;top:930px;width:15px;height:15px;background:#fff;border:1px solid #a0a0a6;border-radius:2px"></div>
<svg class="a" style="left:43px;top:925px;" width="22" height="22" viewBox="0 0 22 22"><path d="M6.2 11 L9.4 14.6 L17 4.8" fill="none" stroke="#0a9a46" stroke-width="2.8" stroke-linecap="round" stroke-linejoin="round"/></svg>
<svg class="a" style="left:94px;top:930px;" width="16" height="16" viewBox="0 0 16 16"><circle cx="8" cy="8" r="5.7" fill="none" stroke="#58a63c" stroke-width="1.05"/></svg>
<div class="t" style="left:192.90px;top:932px;font-size:13.8px;font-weight:normal;color:#4a4a4a;transform:scaleX(0.9390);transform-origin:0 0;">Справки о заработке, с предыдущего места работы</div>
<div class="a" style="left:28px;top:953px;width:1030px;height:28px;background:#fff"></div>
<div class="a" style="left:28px;top:954px;width:49px;height:23px;background:#fdd820"></div>
<div class="a" style="left:78px;top:954px;width:980px;height:23px;background:#fff0a4"></div>
<div class="a" style="left:126px;top:954px;width:1px;height:23px;background:#fff"></div>
<div class="a" style="left:175px;top:954px;width:1px;height:23px;background:#fff"></div>
<div class="a" style="left:28px;top:981px;width:1030px;height:1px;background:#e2e2e2"></div>
<div class="a" style="left:45px;top:959px;width:15px;height:15px;background:#fff;border:1px solid #a0a0a6;border-radius:2px"></div>
<svg class="a" style="left:43px;top:954px;" width="22" height="22" viewBox="0 0 22 22"><path d="M6.2 11 L9.4 14.6 L17 4.8" fill="none" stroke="#0a9a46" stroke-width="2.8" stroke-linecap="round" stroke-linejoin="round"/></svg>
<svg class="a" style="left:94px;top:959px;" width="16" height="16" viewBox="0 0 16 16"><circle cx="8" cy="8" r="5.7" fill="none" stroke="#58a63c" stroke-width="1.05"/></svg>
<div class="t" style="left:192.90px;top:961px;font-size:13.8px;font-weight:normal;color:#4a4a4a;transform:scaleX(0.9270);transform-origin:0 0;">Стаж для больничных листов</div>
<div class="a" style="left:0px;top:977px;width:1058px;height:1px;background:#fff"></div>
<div class="a" style="left:0px;top:978px;width:1058px;height:1px;background:#8c8c8c"></div>
<div class="a" style="left:39px;top:897px;width:476px;height:80px;border:3px solid #f00;border-radius:1px"></div>
</body></html>
